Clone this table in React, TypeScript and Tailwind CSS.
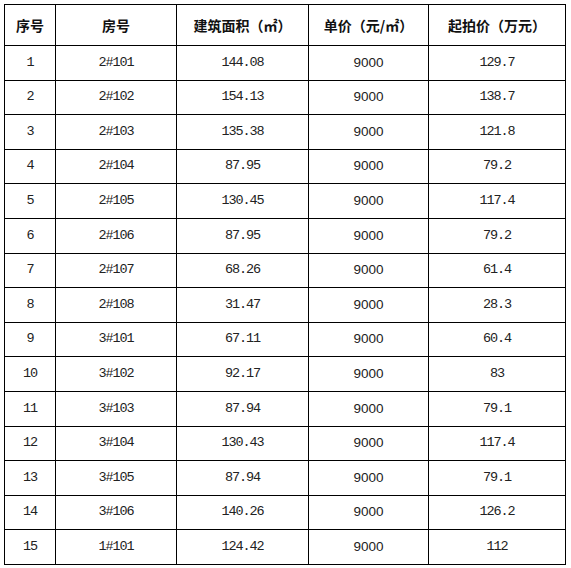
const rows: [string, string, string, string][] = [
  ['2#101', '144.08', '9000', '129.7'],
  ['2#102', '154.13', '9000', '138.7'],
  ['2#103', '135.38', '9000', '121.8'],
  ['2#104', '87.95', '9000', '79.2'],
  ['2#105', '130.45', '9000', '117.4'],
  ['2#106', '87.95', '9000', '79.2'],
  ['2#107', '68.26', '9000', '61.4'],
  ['2#108', '31.47', '9000', '28.3'],
  ['3#101', '67.11', '9000', '60.4'],
  ['3#102', '92.17', '9000', '83'],
  ['3#103', '87.94', '9000', '79.1'],
  ['3#104', '130.43', '9000', '117.4'],
  ['3#105', '87.94', '9000', '79.1'],
  ['3#106', '140.26', '9000', '126.2'],
  ['1#101', '124.42', '9000', '112'],
];

const headers = ['序号', '房号', '建筑面积（㎡）', '单价（元/㎡）', '起拍价（万元）'];

// SimSun-ish look for the numbers: mono with tightened tracking
const mono = "font-['Liberation_Mono',monospace] text-[13.5px] tracking-[-1.1px] text-[#222]";
const sans = "font-['Liberation_Sans',Arial,sans-serif] text-[13.5px] text-[#222]";

export default function App() {
  return (
    <div className="w-[571px] h-[568px] bg-white pt-[4px] pl-[4px]">
      <table className="table-fixed border-collapse w-[562px]">
        <colgroup>
          <col className="w-[51px]" />
          <col className="w-[121px]" />
          <col className="w-[132px]" />
          <col className="w-[120px]" />
          <col className="w-[137px]" />
        </colgroup>
        <thead>
          <tr className="h-[41px]">
            {headers.map((h) => (
              <th
                key={h}
                className="border border-black p-0 text-center align-middle font-bold text-[14px] text-[#111] font-['Noto_Sans_CJK_SC',sans-serif]"
              >
                {h}
              </th>
            ))}
          </tr>
        </thead>
        <tbody>
          {rows.map((r, i) => (
            <tr key={r[0]} className="h-[34.6px]">
              <td className={`border border-black p-0 text-center align-middle ${mono}`}>{i + 1}</td>
              <td className={`border border-black p-0 text-center align-middle ${mono}`}>{r[0]}</td>
              <td className={`border border-black p-0 text-center align-middle ${mono}`}>{r[1]}</td>
              <td className={`border border-black p-0 text-center align-middle ${sans}`}>{r[2]}</td>
              <td className={`border border-black p-0 text-center align-middle ${mono}`}>{r[3]}</td>
            </tr>
          ))}
        </tbody>
      </table>
    </div>
  );
}
